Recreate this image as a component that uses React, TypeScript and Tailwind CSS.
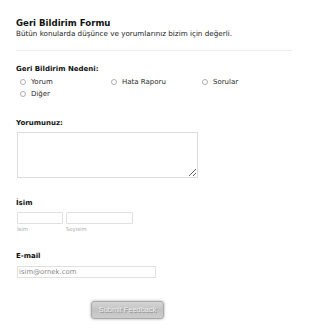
import React from 'react';

const reasons = ['Yorum', 'Hata Raporu', 'Sorular', 'Diğer'];

const App: React.FC = () => {
  return (
    <div className="w-[310px] h-[335px] bg-white overflow-hidden font-['DejaVu_Sans',Verdana,sans-serif] text-[#222]">
      <div className="pl-[16px] pt-[17px]">
        {/* Header */}
        <h1 className="h-[12px] leading-[12px] text-[8.6px] font-bold text-[#111]">Geri Bildirim Formu</h1>
        <p className="h-[10px] leading-[10px] text-[7.2px] text-[#222]">
          Bütün konularda düşünce ve yorumlarınız bizim için değerli.
        </p>
        <div className="mt-[11px] w-[276px] border-t border-[#ececec]" />

        {/* Reason */}
        <div className="mt-[13px] h-[10px] leading-[10px] text-[7px] font-bold text-[#111]">Geri Bildirim Nedeni:</div>
        <div className="mt-[2px] grid grid-cols-[91px_91px_91px] auto-rows-[12px]">
          {reasons.map((r) => (
            <label key={r} className="flex items-center pl-[4px] text-[7px] text-[#2a2a2a]">
              <span className="w-[6px] h-[6px] rounded-full border border-[#b0b0b0] bg-white shrink-0" />
              <span className="ml-[5px]">{r}</span>
            </label>
          ))}
        </div>

        {/* Comment */}
        <div className="mt-[18px] h-[10px] leading-[10px] text-[7px] font-bold text-[#111]">Yorumunuz:</div>
        <textarea className="block mt-[4px] ml-[1px] w-[181px] h-[46px] border border-[#dcdcdc] bg-white outline-none resize" />

        {/* Name */}
        <div className="mt-[20px] h-[10px] leading-[10px] text-[7px] font-bold text-[#111]">İsim</div>
        <div className="mt-[4px] ml-[1px] flex gap-[3px]">
          <div className="flex flex-col">
            <input className="w-[46px] h-[12px] border border-[#e0e0e0] rounded-[1px] outline-none" />
            <span className="h-[10px] leading-[10px] text-[5.3px] text-[#aaa]">İsim</span>
          </div>
          <div className="flex flex-col">
            <input className="w-[67px] h-[12px] border border-[#e0e0e0] rounded-[1px] outline-none" />
            <span className="h-[10px] leading-[10px] text-[5.3px] text-[#aaa]">Soyisim</span>
          </div>
        </div>

        {/* Email */}
        <div className="mt-[17px] h-[10px] leading-[10px] text-[7px] font-bold text-[#111]">E-mail</div>
        <input
          className="block mt-[5px] ml-[1px] w-[139px] h-[12px] px-[1px] border border-[#e0e0e0] text-[6.9px] outline-none placeholder:text-[#8a8a8a]"
          placeholder="isim@ornek.com"
        />

        {/* Submit */}
        <button className="block mt-[23px] ml-[75px] w-[73px] h-[18px] rounded-[3px] border border-[#a9a9a9] bg-gradient-to-b from-[#d6d6d6] via-[#c2c2c2] to-[#cdcdcd] shadow-[0_0_3px_rgba(0,0,0,0.35)] font-['Liberation_Sans',Arial,sans-serif] text-[7.4px] text-[#efefef] [text-shadow:1px_1px_0_#8f8f8f]">
          Submit Feedback
        </button>
      </div>
    </div>
  );
};

export default App;
